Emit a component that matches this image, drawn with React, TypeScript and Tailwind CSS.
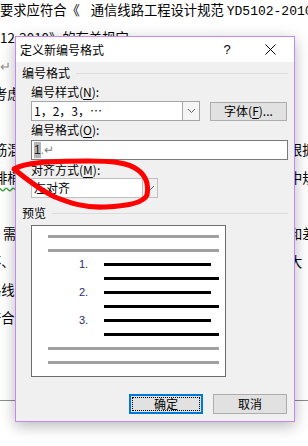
import React from 'react';

const cjk = { fontFamily: '"Noto Sans CJK SC", "Noto Sans", sans-serif' };
const ui = { fontFamily: '"Noto Sans CJK SC", "Liberation Sans", sans-serif' };

// page text behind the dialog: only the edges show
const pageLines: { left: string; right?: string; leftClass?: string }[] = [
  { left: '↵', leftClass: 'text-[#909090]' },
  { left: '考虑', leftClass: 'ml-[-6px]' },
  { left: '' },
  { left: '筋混', right: '根据', leftClass: 'ml-[-6px]' },
  { left: '排梢', right: '中规', leftClass: 'ml-[-6px] underline decoration-wavy decoration-[#3aa03a] underline-offset-4' },
  { left: '' },
  { left: '需', right: '和差', leftClass: 'ml-[3px]' },
  { left: '不、', right: '大', leftClass: 'ml-[-12px]' },
  { left: '路线', leftClass: 'ml-[-12px]' },
  { left: '符合', leftClass: 'ml-[-12px]' },
];

function Chevron() {
  return (
    <svg width="9" height="6" viewBox="0 0 9 6">
      <path d="M1 1 L4.5 4.5 L8 1" fill="none" stroke="#606060" strokeWidth="1" />
    </svg>
  );
}

function Label({ text, hot, rest }: { text: string; hot: string; rest: string }) {
  return (
    <div className="h-4 leading-4 text-[12px] text-black pl-[15px]" style={ui}>
      {text}(<span className="underline underline-offset-2">{hot}</span>){rest}
    </div>
  );
}

function PreviewRow({ kind, num }: { kind: 'gray' | 'short' | 'long'; num?: string }) {
  return (
    <div className="h-[14px] flex items-center">
      {kind === 'gray' ? (
        <div className="ml-[16px] w-[171px] h-[3px] bg-[#a0a0a0]" />
      ) : (
        <>
          <div className="w-[72px] pl-[47px] text-[11px] leading-[14px] text-[#1f2c6b]" style={{ fontFamily: '"Liberation Sans", sans-serif' }}>
            {num}
          </div>
          <div className={`h-[3px] bg-black ${kind === 'short' ? 'w-[107px]' : 'w-[115px]'}`} />
        </>
      )}
    </div>
  );
}

export default function App() {
  return (
    <div className="relative w-[308px] h-[446px] overflow-hidden bg-white">
      {/* document behind */}
      <div className="mt-[-4px]" style={cjk}>
        <div className="h-[28px] leading-[28px] text-[13.3px] text-black whitespace-nowrap">
          要求应符合《<span className="ml-[11px]">通信线路工程设计规范 </span>
          <span style={{ fontFamily: '"Liberation Mono", monospace' }} className="text-[13px]">YD5102-2010</span>》
        </div>
        <div className="h-[28px] leading-[28px] text-[13.3px] text-black whitespace-nowrap">
          12-2010》的有关规定。
        </div>
        {pageLines.map((l, i) => (
          <div key={i} className="h-[28px] leading-[28px] text-[13.3px] text-black whitespace-nowrap flex justify-between">
            <div className="w-[15px] overflow-hidden">
              <span className={`inline-block ${l.leftClass ?? ''}`}>{l.left}</span>
            </div>
            {l.right && (
              <div className="w-[13px] overflow-hidden flex justify-start">
                <span className="ml-[-6px]">{l.right}</span>
              </div>
            )}
          </div>
        ))}
        <div className="mt-[68px] h-px bg-[#8c8c8c]" />
      </div>

      {/* dialog */}
      <div className="absolute left-[15px] top-[36px] w-[280px] h-[386px] border border-[#c28af0] bg-[#f0f0f0] shadow-[0_4px_14px_rgba(0,0,0,0.28)] flex flex-col">
        <div className="h-[25px] bg-white flex items-center pl-1 shrink-0">
          <span className="text-[12px] text-black" style={ui}>定义新编号格式</span>
          <span className="ml-auto w-[12px] text-center text-[13px] text-black mr-[32px]" style={{ fontFamily: '"Liberation Sans", sans-serif' }}>?</span>
          <svg width="11" height="11" viewBox="0 0 11 11" className="mr-[18px]">
            <path d="M0.5 0.5 L10.5 10.5 M10.5 0.5 L0.5 10.5" stroke="#000" strokeWidth="1" />
          </svg>
        </div>

        <div className="flex-1 flex flex-col">
          <div className="mt-[3px] h-4 flex items-center pl-[6px] pr-[6px]">
            <span className="text-[12px] leading-4 text-black" style={ui}>编号格式</span>
            <div className="flex-1 ml-[6px] h-px bg-[#dcdcdc]" />
          </div>

          <div className="mt-[3px]">
            <Label text="编号样式" hot="N" rest=":" />
          </div>
          <div className="mt-[1px] pl-[15px] flex items-center">
            <div className="w-[169px] h-[20px] bg-white border border-[#a6a6a6] flex items-center">
              <span className="pl-[2px] text-[12px] text-black flex-1" style={ui}>1，2，3，…</span>
              <div className="w-[17px] h-full border-l border-[#a6a6a6] bg-[#f5f5f5] flex items-center justify-center">
                <Chevron />
              </div>
            </div>
            <div className="ml-[10px] w-[77px] h-[19px] bg-[#e1e1e1] border border-[#adadad] flex items-center justify-center text-[12px] text-black" style={ui}>
              字体(<span className="underline underline-offset-2">F</span>)...
            </div>
          </div>

          <div className="mt-[1px]">
            <Label text="编号格式" hot="O" rest=":" />
          </div>
          <div className="mt-[2px] pl-[15px]">
            <div className="w-[257px] h-[20px] bg-white border border-[#7a7a7a] flex items-center pl-[2px] text-[12px]" style={{ fontFamily: '"Liberation Sans", sans-serif' }}>
              <span className="bg-[#b4b4b4] text-[#202020] leading-[16px]">1</span>
              <span className="text-[#808080]">.↵</span>
            </div>
          </div>

          <div className="mt-[2px]">
            <Label text="对齐方式" hot="M" rest=":" />
          </div>
          <div className="pl-[15px]">
            <div className="w-[127px] h-[20px] bg-white border border-[#bfbfbf] flex items-center">
              <span className="pl-[2px] text-[12px] text-black flex-1" style={ui}>左对齐</span>
              <div className="w-[15px] h-full bg-[#f0f0f0] border-l border-[#bfbfbf] flex items-center justify-center">
                <Chevron />
              </div>
            </div>
          </div>

          <div className="mt-[7px] h-4 flex items-center pl-[6px] pr-[6px]">
            <span className="text-[12px] leading-4 text-black" style={ui}>预览</span>
            <div className="flex-1 ml-[6px] h-px bg-[#dcdcdc]" />
          </div>

          <div className="mt-[4px] ml-[15px] w-[195px] h-[152px] bg-white border border-[#6d6d6d] pt-[3px]">
            <PreviewRow kind="gray" />
            <PreviewRow kind="gray" />
            <PreviewRow kind="short" num="1." />
            <PreviewRow kind="long" />
            <PreviewRow kind="short" num="2." />
            <PreviewRow kind="long" />
            <PreviewRow kind="short" num="3." />
            <PreviewRow kind="long" />
            <PreviewRow kind="gray" />
            <PreviewRow kind="gray" />
          </div>

          <div className="mt-[17px] flex justify-end gap-[10px] pr-[7px]">
            <div className="w-[74px] h-[20px] border-2 border-[#0078d7] bg-[#e1e1e1] p-[1px]">
              <div className="w-full h-full border border-dotted border-black flex items-center justify-center text-[12px] text-black" style={ui}>
                确定
              </div>
            </div>
            <div className="w-[74px] h-[20px] border border-[#adadad] bg-[#e1e1e1] flex items-center justify-center text-[12px] text-black" style={ui}>
              取消
            </div>
          </div>
        </div>
      </div>

      {/* red hand-drawn mark */}
      <svg className="absolute left-0 top-0 pointer-events-none" width="308" height="446" viewBox="0 0 308 446">
        <path
          d="M14,169 C25,163 45,161 88,161 C110,161 128,162 138,170 C146,176 149,184 147,195 C144,202 130,206 105,207 C85,208 70,203 55,197 C40,190 25,178 14,169 Z"
          fill="none"
          stroke="#ff0000"
          strokeWidth="5"
          strokeLinejoin="round"
        />
      </svg>
    </div>
  );
}
